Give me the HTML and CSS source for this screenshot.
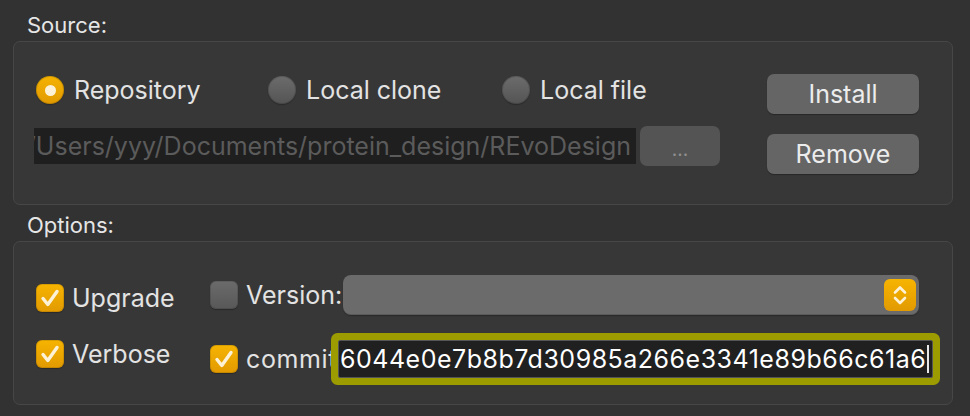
FILE: index.html
```html
<!DOCTYPE html>
<html>
<head>
<meta charset="utf-8">
<link rel="stylesheet" href="styles.css">
</head>
<body>
  <div class="section-label first">Source:</div>
  <div class="group source">
    <div class="source-left">
      <div class="radio-row">
        <label class="radio-item w1"><span class="radio on"><span class="dot"></span></span><span class="txt">Repository</span></label>
        <label class="radio-item w2"><span class="radio"></span><span class="txt">Local clone</span></label>
        <label class="radio-item"><span class="radio"></span><span class="txt">Local file</span></label>
      </div>
      <div class="path-row">
        <div class="path-field"><span>/Users/yyy/Documents/protein_design/REvoDesign</span></div>
        <div class="browse-btn">...</div>
      </div>
    </div>
    <div class="source-right">
      <div class="btn">Install</div>
      <div class="btn">Remove</div>
    </div>
  </div>

  <div class="section-label second">Options:</div>
  <div class="group options">
    <div class="opt-col1">
      <label class="check-item"><span class="check on"><svg viewBox="0 0 28 28"><path d="M7 14.5 L11.8 20.5 L21 7.5"/></svg></span><span class="txt">Upgrade</span></label>
      <label class="check-item"><span class="check on"><svg viewBox="0 0 28 28"><path d="M7 14.5 L11.8 20.5 L21 7.5"/></svg></span><span class="txt">Verbose</span></label>
    </div>
    <div class="opt-col2">
      <div class="version-row">
        <span class="check"></span>
        <span class="txt ver-label">Version:</span>
        <div class="combo">
          <span class="stepper"><svg viewBox="0 0 32 32"><path d="M11 13.5 L16 8.5 L21 13.5 M11 19 L16 24 L21 19"/></svg></span>
        </div>
      </div>
      <div class="commit-row">
        <span class="check on"><svg viewBox="0 0 28 28"><path d="M7 14.5 L11.8 20.5 L21 7.5"/></svg></span>
        <span class="txt commit-label">commit</span>
        <div class="commit-field"><span>6044e0e7b8b7d30985a266e3341e89b66c61a6</span><span class="caret"></span></div>
      </div>
    </div>
  </div>
</body>
</html>
```

FILE: styles.css
```css
* { box-sizing: border-box; }

html, body {
  margin: 0;
  padding: 0;
  background: #323232;
}

body {
  width: 970px;
  height: 416px;
  overflow: hidden;
  font-family: "Inter", "Noto Sans", sans-serif;
  color: #e3e3e3;
}

.section-label {
  font-size: 22px;
  line-height: 22px;
  padding-left: 27px;
  color: #e6e6e6;
}
.section-label.first { padding-top: 14px; margin-bottom: 5px; }
.section-label.second { margin-top: 9px; margin-bottom: 5px; }

.group {
  margin: 0 17px 0 13px;
  height: 164px;
  border: 1px solid #474747;
  border-radius: 7px;
  background: #373737;
}

.txt {
  font-size: 25px;
  line-height: 28px;
  white-space: nowrap;
  color: #e3e3e3;
}

/* ---------- Source ---------- */
.source {
  display: flex;
  padding: 0 33px 0 20px;
}
.source-left {
  flex: 1;
  padding-top: 34px;
  padding-left: 2px;
}
.radio-row {
  display: flex;
  height: 28px;
}
.radio-item {
  display: flex;
  align-items: center;
  gap: 10px;
}
.radio-item.w1 { width: 232px; }
.radio-item.w2 { width: 234px; }

.radio {
  width: 28px;
  height: 28px;
  border-radius: 50%;
  background: linear-gradient(#6c6c6c, #545454);
  box-shadow: inset 0 0 0 1px rgba(0,0,0,0.15), 0 1px 1px rgba(0,0,0,0.25);
  display: flex;
  align-items: center;
  justify-content: center;
  flex: none;
}
.radio.on {
  background: linear-gradient(#f5b300, #e19a00);
}
.radio .dot {
  width: 11px;
  height: 11px;
  border-radius: 50%;
  background: #fdf2d8;
}

.path-row {
  display: flex;
  margin-top: 22px;
  margin-left: -2px;
  align-items: center;
}
.path-field {
  width: 602px;
  height: 36px;
  background: #1f1f1f;
  overflow: hidden;
  display: flex;
  justify-content: flex-end;
  padding-right: 5px;
  font-size: 25px;
  line-height: 36px;
  color: #5b5b5b;
  white-space: nowrap;
}
.browse-btn {
  margin-left: 4px;
  width: 80px;
  height: 40px;
  border-radius: 7px;
  background: #545454;
  color: #8e8e8e;
  font-size: 19px;
  line-height: 40px;
  text-align: center;
  padding-top: 4px;
}

.source-right {
  display: flex;
  flex-direction: column;
  gap: 20px;
  padding-top: 32px;
}
.btn {
  width: 152px;
  height: 40px;
  border-radius: 7px;
  background: #656565;
  box-shadow: 0 1px 1px rgba(0,0,0,0.3);
  font-size: 25px;
  line-height: 40px;
  text-align: center;
  color: #ececec;
}

/* ---------- Options ---------- */
.options {
  display: flex;
  padding: 0 33px 0 22px;
}
.opt-col1 {
  width: 174px;
  padding-top: 42px;
  display: flex;
  flex-direction: column;
  gap: 28px;
}
.check-item {
  display: flex;
  align-items: center;
  gap: 8px;
  height: 28px;
}
.check {
  width: 28px;
  height: 28px;
  border-radius: 6px;
  background: linear-gradient(#6b6b6b, #585858);
  box-shadow: inset 0 0 0 1px rgba(0,0,0,0.12), 0 1px 1px rgba(0,0,0,0.25);
  flex: none;
  display: block;
}
.check.on {
  background: linear-gradient(#f6b400, #e29a00);
}
.check svg {
  display: block;
  width: 28px;
  height: 28px;
}
.check svg path {
  fill: none;
  stroke: #fdf1d6;
  stroke-width: 3.4;
  stroke-linecap: round;
  stroke-linejoin: round;
}

.opt-col2 {
  flex: 1;
  padding-top: 33px;
  display: flex;
  flex-direction: column;
  gap: 25px;
}
.version-row {
  display: flex;
  align-items: center;
  height: 40px;
}
.version-row .check { margin-right: 8px; }
.ver-label { width: 97px; }
.combo {
  flex: 1;
  height: 40px;
  border-radius: 8px;
  background: #6b6b6b;
  box-shadow: inset 0 -1px 0 rgba(0,0,0,0.15), 0 1px 1px rgba(0,0,0,0.25);
  display: flex;
  justify-content: flex-end;
  align-items: center;
  padding-right: 3px;
}
.stepper {
  width: 32px;
  height: 32px;
  border-radius: 6px;
  background: linear-gradient(#f6b400, #e29a00);
  display: block;
}
.stepper svg {
  display: block;
  width: 32px;
  height: 32px;
}
.stepper svg path {
  fill: none;
  stroke: #fdf1d6;
  stroke-width: 2.6;
  stroke-linecap: round;
  stroke-linejoin: round;
}

.commit-row {
  display: flex;
  align-items: center;
  height: 38px;
  margin-right: -14px;
}
.commit-row .check { margin-right: 8px; }
.commit-label {
  width: 92px;
  overflow: visible;
  letter-spacing: 0.6px;
}
.commit-field {
  position: relative;
  flex: 1;
  height: 38px;
  background: #202020;
  border: 1px solid #555;
  border-radius: 2px;
  box-shadow: 0 0 0 7px #9c9b00;
  font-size: 25px;
  line-height: 36px;
  letter-spacing: 0.5px;
  color: #ffffff;
  white-space: nowrap;
  overflow: hidden;
  display: flex;
  align-items: center;
  padding-left: 1px;
}
.caret {
  display: inline-block;
  width: 2px;
  height: 28px;
  background: #e8e8e8;
  margin-left: 1px;
}
```
